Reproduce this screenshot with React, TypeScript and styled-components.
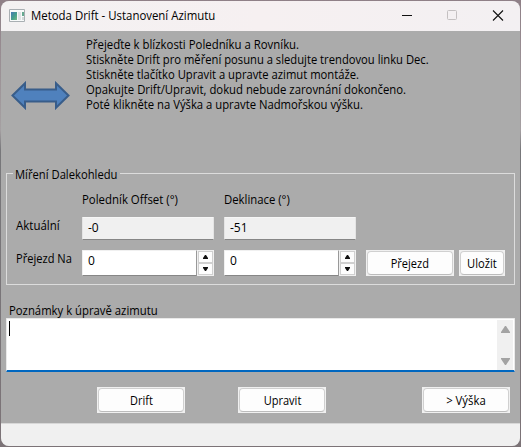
import React from "react";
import styled, { createGlobalStyle } from "styled-components";

const Global = createGlobalStyle`
  * { box-sizing: border-box; }
  html, body, #root { margin: 0; width: 521px; height: 447px; overflow: hidden; }
  body { font: 12px/15px "Open Sans", "Noto Sans", sans-serif; color: #000; background: linear-gradient(#8f8087 0, #a5a0a2 130px, #77777a 150px, #7c7377 100%); }
`;

const Window = styled.main`
  width: 519px; height: 445px; margin: 1px 1px; border-radius: 8px; overflow: hidden;
  background: #ababab; display: flex; flex-direction: column;
`;
const TitleBar = styled.header`
  height: 30px; flex: none; display: flex; align-items: center; padding: 0 16px 0 8px;
  background: linear-gradient(90deg, #f3f1f2, #f6f0f1 50%, #f3f0f2);
`;
const Narrow = styled.span<{ $x: number; $center?: boolean }>`
  display: inline-block; white-space: nowrap; transform: translateY(1px) scaleX(${(p) => p.$x});
  transform-origin: ${(p) => (p.$center ? "center" : "left")};
`;
const Title = styled.h1`
  margin: 0 auto 0 6px; padding-bottom: 3px; font: inherit; white-space: nowrap;
`;
const Controls = styled.div`
  display: flex; align-items: center; svg { display: block; }
`;
const Body = styled.section`
  height: 392px; flex: none; padding: 5px 5px 0; display: flex; flex-direction: column;
`;
const Intro = styled.div`
  height: 135px; flex: none; display: flex; gap: 15px; padding-left: 5px;
  > svg { margin-top: 45px; flex: none; }
`;
const Line = styled.p`
  margin: 0; height: 15px; white-space: nowrap;
`;
const Group = styled.fieldset`
  margin: -5px 0 0; padding: 0 0 0 9px; width: 509px; height: 119px; flex: none; border: 1px solid #dcdcdc; min-width: 0;
`;
const Legend = styled.legend`
  padding: 0 2px; margin-left: -3px; height: 15px; width: 107px;
`;
const Fields = styled.div`
  display: grid; grid-template-columns: 56px 132px 132px 88px 46px; column-gap: 10px;
  grid-template-rows: 15px 23px 26px; row-gap: 10px; padding-top: 11px;
`;
const Caption = styled.span<{ $raised?: boolean }>`
  display: block; white-space: nowrap; margin-top: ${(p) => (p.$raised ? -1 : 0)}px;
`;
const Readout = styled.output`
  height: 23px; border: 1px solid #e4e4e4; border-top-color: #f6f6f6; border-bottom-color: #868686; border-radius: 1px;
  background: #f0f0f0; padding: 2px 5px; display: block;
`;
const Spin = styled.div`
  display: grid; grid-template-columns: 115px 17px; height: 26px;
`;
const Value = styled.span`
  background: #fff; border: 1px solid #f0f0f0; border-bottom-color: #868686; border-right-color: #999; border-radius: 1px; padding: 2px 5px;
`;
const Arrows = styled.span`
  background: #f0f0f0; padding: 1px; display: grid; grid-template-rows: 12px 12px;
`;
const Arrow = styled.span`
  border: 1px solid #d0d0d0; background: #fdfdfd; display: grid; place-items: center; svg { display: block; }
`;
const Button = styled.button<{ $w: number; $shift?: number }>`
  width: ${(p) => p.$w}px; height: 26px; padding: 1px; border: 0; background: #f0f0f0; font: inherit; color: #000;
  margin-left: ${(p) => p.$shift ?? 0}px;
`;
const Face = styled.span`
  display: flex; justify-content: center; height: 24px; padding-top: 3px; border: 1px solid #d0d0d0;
  border-bottom-color: #bcbcbc; border-radius: 4px; background: #fdfdfd;
`;
const NotesLabel = styled(Caption)`
  margin: 17px 0 1px 3px; height: 15px; flex: none;
`;
const Notes = styled.div`
  width: 509px; height: 54px; flex: none; background: #fff; border: 1px solid #e9e9e9; border-bottom: 2px solid #0067c0;
  border-radius: 1px; display: flex; justify-content: space-between; padding: 1px 1px 0 2px;
`;
const Caret = styled.span`
  width: 1px; height: 15px; margin-top: 1px; background: #000;
`;
const ScrollBar = styled.span`
  width: 16px; background: #f0f0f0; display: flex; flex-direction: column; justify-content: space-between; align-items: center; padding: 6px 0 5px;
`;
const Actions = styled.div`
  display: grid; grid-template-columns: 141px 184px 88px; padding: 15px 0 0 91px;
`;
const Status = styled.footer`
  flex: 1; background: #f0f0f0; border-top: 1px solid #d7d7d7;
`;

const intro: [string, number][] = [
  ["Přejeďte k blízkosti Poledníku a Rovníku.", 0.949],
  ["Stiskněte Drift pro měření posunu a sledujte trendovou linku Dec.", 0.935],
  ["Stiskněte tlačítko Upravit a upravte azimut montáže.", 0.937],
  ["Opakujte Drift/Upravit, dokud nebude zarovnání dokončeno.", 0.944],
  ["Poté klikněte na Výška a upravte Nadmořskou výšku.", 0.941],
];

const Spinner = ({ value }: { value: string }) => (
  <Spin>
    <Value>{value}</Value>
    <Arrows>
      <Arrow><svg width="5" height="4"><path d="M2 0h1l2 3v1H0V3z" fill="#111" /></svg></Arrow>
      <Arrow><svg width="5" height="4"><path d="M0 0h5v1L3 4H2L0 1z" fill="#111" /></svg></Arrow>
    </Arrows>
  </Spin>
);

const PushButton = ({ label, width, shift, x }: { label: string; width: number; shift?: number; x: number }) => (
  <Button $w={width} $shift={shift}>
    <Face><Narrow $x={x} $center>{label}</Narrow></Face>
  </Button>
);

export default function App() {
  return (
    <>
      <Global />
      <Window>
        <TitleBar>
          <svg width="16" height="14" viewBox="0 0 16 14">
            <defs>
              <linearGradient id="pane" x2="1" y2="1"><stop stopColor="#4778b5" /><stop offset=".55" stopColor="#46a08c" /><stop offset="1" stopColor="#78b783" /></linearGradient>
            </defs>
            <path d="M.5 .5h15v12h-15z" fill="#f8fafa" stroke="#a9afb3" />
            <path d="M2 3h6v8H2z" fill="url(#pane)" />
            <path d="M9 3h3v8H9z" fill="#dfe3e5" />
            <path d="M13 3h2v4h-2z" fill="#65a990" />
            <path d="M13 8h2v3h-2z" fill="#d3dada" />
          </svg>
          <Title><Narrow $x={0.951}>Metoda Drift - Ustanovení Azimutu</Narrow></Title>
          <Controls>
            <svg width="102" height="12" viewBox="0 0 102 12" fill="none">
              <path d="M0 5.5h10" stroke="#111" />
              <rect x="45.5" y=".5" width="9" height="9" rx="1" stroke="#c4c0c1" />
              <path d="M91 .5l10 10M101 .5L91 10.5" stroke="#111" strokeWidth="1.1" />
            </svg>
          </Controls>
        </TitleBar>
        <Body>
          <Intro>
            <svg width="60" height="29" viewBox="0 0 60 29">
              <path d="M1.5 14.5L14 2.2v6.3h31V2.2l12.5 12.3L45 26.8v-6.3H14v6.3z" fill="#4f81bd" stroke="#385d8a" strokeWidth="2" />
            </svg>
            <div>
              {intro.map(([text, x]) => (
                <Line key={text}><Narrow $x={x}>{text}</Narrow></Line>
              ))}
            </div>
          </Intro>
          <Group>
            <Legend><Narrow $x={0.936}>Míření Dalekohledu</Narrow></Legend>
            <Fields>
              <span />
              <Caption $raised><Narrow $x={0.951}>Poledník Offset (°)</Narrow></Caption>
              <Caption $raised><Narrow $x={0.945}>Deklinace (°)</Narrow></Caption>
              <span /><span />
              <Caption><Narrow $x={0.957}>Aktuální</Narrow></Caption>
              <Readout>-0</Readout>
              <Readout>-51</Readout>
              <span /><span />
              <Caption><Narrow $x={0.925}>Přejezd Na</Narrow></Caption>
              <Spinner value="0" />
              <Spinner value="0" />
              <PushButton width={88} label="Přejezd" x={0.92} />
              <PushButton width={46} shift={-5} label="Uložit" x={0.93} />
            </Fields>
          </Group>
          <NotesLabel><Narrow $x={0.943}>Poznámky k úpravě azimutu</Narrow></NotesLabel>
          <Notes>
            <Caret />
            <ScrollBar>
              <svg width="9" height="7"><path d="M4 0h1l4 6v1H0V6z" fill="#a3a3a3" /></svg>
              <svg width="9" height="7"><path d="M0 0h9v1L5 7H4L0 1z" fill="#a3a3a3" /></svg>
            </ScrollBar>
          </Notes>
          <Actions>
            <PushButton width={88} label="Drift" x={0.91} />
            <PushButton width={88} label="Upravit" x={0.92} />
            <PushButton width={88} label="> Výška" x={0.945} />
          </Actions>
        </Body>
        <Status />
      </Window>
    </>
  );
}
